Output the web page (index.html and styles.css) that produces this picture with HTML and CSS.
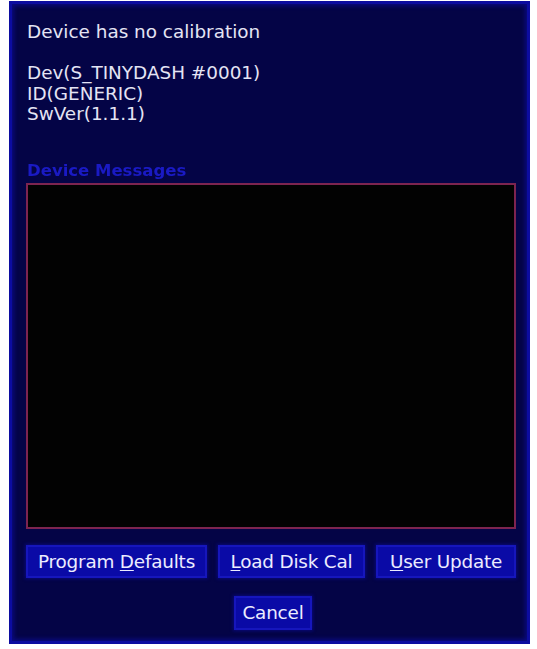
FILE: index.html
```html
<!DOCTYPE html>
<html>
<head>
<meta charset="utf-8">
<link rel="stylesheet" href="styles.css">
</head>
<body>
<div class="panel">
  <div class="info">
    <div>Device has no calibration</div>
    <div class="blank">&nbsp;</div>
    <div>Dev(S_TINYDASH #0001)</div>
    <div>ID(GENERIC)</div>
    <div>SwVer(1.1.1)</div>
  </div>
  <div class="label">Device Messages</div>
  <div class="messages"></div>
  <div class="row">
    <button class="btn btn-defaults">Program <u>D</u>efaults</button>
    <button class="btn btn-load"><u>L</u>oad Disk Cal</button>
    <button class="btn btn-user"><u>U</u>ser Update</button>
  </div>
  <div class="row-center">
    <button class="btn btn-cancel">Cancel</button>
  </div>
</div>
</body>
</html>
```
FILE: styles.css
```css
html, body {
  margin: 0;
  padding: 0;
  background: #ffffff;
}
body {
  padding: 1px 0 0 9px;
  font-family: "DejaVu Sans", sans-serif;
}
.panel {
  box-sizing: border-box;
  width: 521px;
  height: 643px;
  background: #040446;
  border: 3px solid #0c0ca0;
  box-shadow: inset 0 0 4px 2px #0a0a80;
  padding: 18px 14px 0 14px;
  display: flex;
  flex-direction: column;
  color: #e4e4f4;
}
.info {
  font-size: 18.4px;
  line-height: 20.5px;
  padding-left: 1px;
}
.label {
  margin-top: 36px;
  height: 22px;
  font-size: 16.5px;
  line-height: 20px;
  font-weight: bold;
  color: #1a1ac4;
  padding-left: 1px;
  filter: blur(0.7px);
}
.messages {
  box-sizing: border-box;
  width: 490px;
  height: 346px;
  background: #020202;
  border: 2px solid #7d2450;
}
.row {
  margin-top: 16px;
  display: flex;
  justify-content: space-between;
  width: 490px;
}
.row-center {
  margin-top: 18px;
  display: flex;
  justify-content: center;
  width: 490px;
  padding-left: 2px;
}
.btn {
  box-sizing: border-box;
  height: 33px;
  background: #0a0aa6;
  border: 2px solid #1616bc;
  color: #ececff;
  font-family: "DejaVu Sans", sans-serif;
  font-size: 18.4px;
  letter-spacing: -0.2px;
  padding: 0 2px;
  white-space: nowrap;
  box-shadow: 0 0 3px 1px #08087a;
}
.btn u {
  text-decoration-thickness: 1px;
  text-underline-offset: 2px;
}
.btn-defaults { width: 181px; }
.btn-load { width: 147px; }
.btn-user { width: 140px; }
.btn-cancel { width: 78px; height: 34px; }
```
